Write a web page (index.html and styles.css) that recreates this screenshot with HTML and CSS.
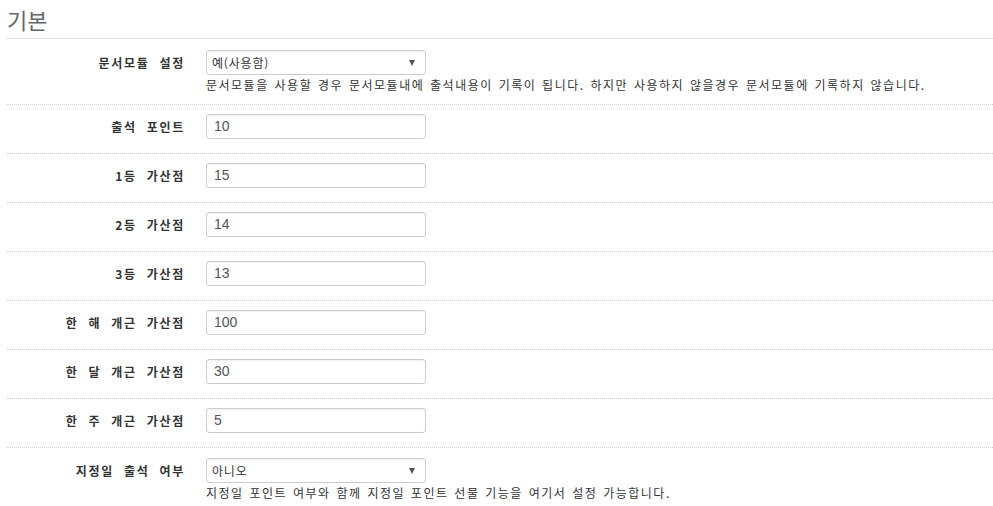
FILE: index.html
```html
<!DOCTYPE html>
<html lang="ko">
<head>
<meta charset="utf-8">
<title>기본</title>
<link rel="stylesheet" href="styles.css">
</head>
<body>
<div class="page">
  <h2 class="section-title">기본</h2>
  <div class="form">
    <div class="row first">
      <label class="label">문서모듈 설정</label>
      <div class="control">
        <div class="select"><span class="select-text">예(사용함)</span><span class="arrow"></span></div>
        <p class="help">문서모듈을 사용할 경우 문서모듈내에 출석내용이 기록이 됩니다. 하지만 사용하지 않을경우 문서모듈에 기록하지 않습니다.</p>
      </div>
    </div>
    <div class="row">
      <label class="label">출석 포인트</label>
      <div class="control"><div class="input">10</div></div>
    </div>
    <div class="row">
      <label class="label">1등 가산점</label>
      <div class="control"><div class="input">15</div></div>
    </div>
    <div class="row">
      <label class="label">2등 가산점</label>
      <div class="control"><div class="input">14</div></div>
    </div>
    <div class="row">
      <label class="label">3등 가산점</label>
      <div class="control"><div class="input">13</div></div>
    </div>
    <div class="row">
      <label class="label">한 해 개근 가산점</label>
      <div class="control"><div class="input">100</div></div>
    </div>
    <div class="row">
      <label class="label">한 달 개근 가산점</label>
      <div class="control"><div class="input">30</div></div>
    </div>
    <div class="row">
      <label class="label">한 주 개근 가산점</label>
      <div class="control"><div class="input">5</div></div>
    </div>
    <div class="row last">
      <label class="label">지정일 출석 여부</label>
      <div class="control">
        <div class="select"><span class="select-text">아니오</span><span class="arrow"></span></div>
        <p class="help">지정일 포인트 여부와 함께 지정일 포인트 선물 기능을 여기서 설정 가능합니다.</p>
      </div>
    </div>
  </div>
</div>
</body>
</html>
```
FILE: styles.css
```css
html, body {
  margin: 0;
  padding: 0;
  background: #fff;
}
body {
  font-family: "Noto Sans CJK KR", "Noto Sans", sans-serif;
  color: #333;
}
.page {
  padding-left: 7px;
}
.section-title {
  margin: 0;
  padding: 6px 0 0 0;
  height: 32px;
  font-size: 22px;
  line-height: 26px;
  font-weight: normal;
  color: #666;
  border-bottom: 1px solid #ddd;
}
.form {
  display: flex;
  flex-direction: column;
}
.row {
  display: grid;
  grid-template-columns: 178px 220px;
  column-gap: 21px;
  padding: 9px 0 14px 0;
  border-top: 1px dotted #ccc;
  align-items: start;
}
.row.first {
  border-top: none;
  padding: 11px 0 10px 0;
}
.row.last {
  padding: 10px 0 0 0;
}
.label {
  text-align: right;
  font-size: 12px;
  line-height: 25px;
  height: 25px;
  font-weight: bold;
  letter-spacing: 1.7px;
  word-spacing: 5px;
  color: #333;
  white-space: nowrap;
}
.control {
  display: flex;
  flex-direction: column;
}
.input, .select {
  box-sizing: border-box;
  width: 220px;
  height: 25px;
  border: 1px solid #ccc;
  border-radius: 3px;
  box-shadow: inset 0 1px 1px rgba(0,0,0,0.06);
  background: #fff;
  font-family: "Liberation Sans", "Noto Sans CJK KR", sans-serif;
  font-size: 14px;
  line-height: 23px;
  color: #555;
  padding: 0 7px;
}
.select {
  position: relative;
  font-family: "Noto Sans CJK KR", sans-serif;
  font-size: 12px;
  color: #333;
  padding-left: 5px;
  letter-spacing: 0.8px;
}
.arrow {
  position: absolute;
  right: 10px;
  top: 9px;
  width: 0;
  height: 0;
  border-left: 3px solid transparent;
  border-right: 3px solid transparent;
  border-top: 6px solid #555;
}
.help {
  margin: 0;
  padding-top: 1px;
  font-size: 12px;
  line-height: 18px;
  color: #333;
  white-space: nowrap;
  letter-spacing: 1.5px;
  word-spacing: 1px;
}
```
